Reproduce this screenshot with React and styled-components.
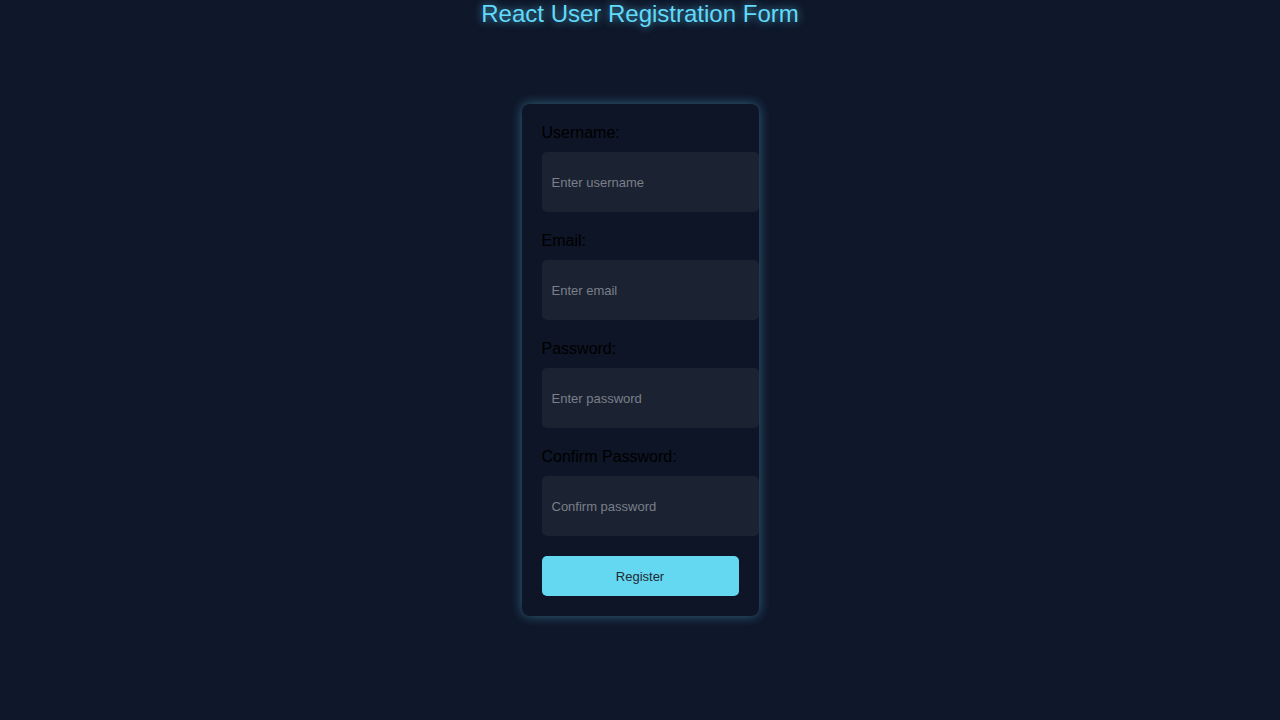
import styled, { createGlobalStyle } from "styled-components";

const GlobalStyle = createGlobalStyle`
  html, body {
    margin: 0;
    padding: 0;
    background-color: #0f172a;
    font-family: "Liberation Sans", Arial, sans-serif;
  }
`;

const Page = styled.div`
  min-height: 100vh;
  display: flex;
  flex-direction: column;
  align-items: center;
`;

const Title = styled.h1`
  margin: 0;
  font-size: 24px;
  line-height: 28px;
  font-weight: normal;
  color: #61dafb;
  text-shadow: 0 0 8px rgba(97, 218, 251, 0.7);
`;

const Card = styled.form`
  margin-top: 76px;
  width: 197px;
  padding: 20px;
  background-color: #0d1526;
  border-radius: 8px;
  box-shadow: 0 0 12px rgba(97, 218, 251, 0.4);
`;

const Field = styled.div`
  margin-bottom: 20px;
`;

const Label = styled.label`
  display: block;
  font-size: 16px;
  line-height: 18px;
  color: #000000;
  margin-bottom: 10px;
`;

const Input = styled.input`
  box-sizing: border-box;
  width: calc(100% + 20px);
  height: 60px;
  padding: 0 10px;
  border: none;
  border-radius: 5px;
  background-color: #1b2333;
  color: #e5e7eb;
  font-family: "Liberation Sans", Arial, sans-serif;
  font-size: 13px;
  outline: none;

  &::placeholder {
    color: #7a7f88;
  }
`;

const Button = styled.button`
  display: block;
  width: 100%;
  height: 40px;
  border: none;
  border-radius: 5px;
  background-color: #64d8f0;
  color: #222a35;
  font-family: "Liberation Sans", Arial, sans-serif;
  font-size: 13px;
  cursor: pointer;
`;

const fields = [
  { id: "username", label: "Username:", type: "text", placeholder: "Enter username" },
  { id: "email", label: "Email:", type: "email", placeholder: "Enter email" },
  { id: "password", label: "Password:", type: "password", placeholder: "Enter password" },
  { id: "confirm", label: "Confirm Password:", type: "password", placeholder: "Confirm password" },
];

export default function App() {
  return (
    <>
      <GlobalStyle />
      <Page>
        <Title>React User Registration Form</Title>
        <Card onSubmit={(e) => e.preventDefault()}>
          {fields.map((f) => (
            <Field key={f.id}>
              <Label htmlFor={f.id}>{f.label}</Label>
              <Input id={f.id} type={f.type} placeholder={f.placeholder} />
            </Field>
          ))}
          <Button type="submit">Register</Button>
        </Card>
      </Page>
    </>
  );
}
